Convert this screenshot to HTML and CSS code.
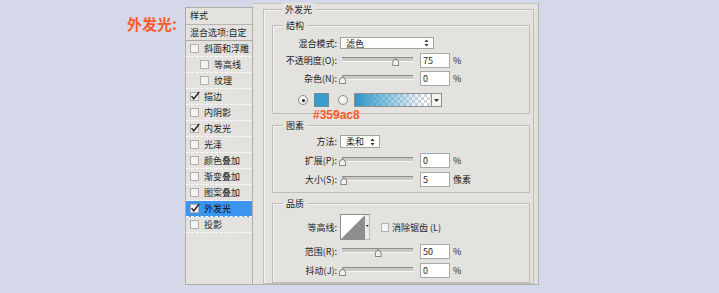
FILE: index.html
```html
<!DOCTYPE html>
<html lang="zh">
<head>
  <meta charset="UTF-8" />
  <title>外发光</title>
  <link rel="stylesheet" href="styles.css">
</head>
<body>
  <div class="stage">
    <h1 class="note">外发光:</h1>

    <div class="dialog">
      <aside class="styles-list">
        <div class="list-head">样式</div>
        <div class="list-blend">混合选项:自定</div>
        <ul class="list">
          <li class="item"><span class="cb"></span>斜面和浮雕</li>
          <li class="item sub"><span class="cb"></span>等高线</li>
          <li class="item sub"><span class="cb"></span>纹理</li>
          <li class="item"><span class="cb on"><svg viewBox="0 0 10 10"><path d="M1.5 5.2 L3.8 7.8 L9.2 1" /></svg></span>描边</li>
          <li class="item"><span class="cb"></span>内阴影</li>
          <li class="item"><span class="cb on"><svg viewBox="0 0 10 10"><path d="M1.5 5.2 L3.8 7.8 L9.2 1" /></svg></span>内发光</li>
          <li class="item"><span class="cb"></span>光泽</li>
          <li class="item"><span class="cb"></span>颜色叠加</li>
          <li class="item"><span class="cb"></span>渐变叠加</li>
          <li class="item"><span class="cb"></span>图案叠加</li>
          <li class="item active"><span class="cb on"><svg viewBox="0 0 10 10"><path d="M1.5 5.2 L3.8 7.8 L9.2 1" /></svg></span>外发光</li>
          <li class="item"><span class="cb"></span>投影</li>
        </ul>
      </aside>

      <main class="panel">
        <section class="group outer">
          <div class="group-title">外发光</div>

          <section class="group struct">
            <div class="group-title">结构</div>
            <div class="row r-select">
              <span class="lbl">混合模式:</span>
              <div class="select wide"><span>滤色</span><svg class="updown" viewBox="0 0 5 8"><path d="M0.5 3 L2.5 0.5 L4.5 3 Z M0.5 5 L2.5 7.5 L4.5 5 Z" /></svg></div>
            </div>
            <div class="row r-opacity">
              <span class="lbl">不透明度(O):</span>
              <div class="slider"><span class="thumb" style="left: 75%"></span></div>
              <div class="num">75</div>
              <span class="unit">%</span>
            </div>
            <div class="row r-noise">
              <span class="lbl">杂色(N):</span>
              <div class="slider"><span class="thumb" style="left: 0%"></span></div>
              <div class="num">0</div>
              <span class="unit">%</span>
            </div>
            <div class="row r-color">
              <span class="radio on"></span>
              <span class="swatch"></span>
              <span class="radio"></span>
              <span class="gradient"></span>
              <span class="drop"><svg viewBox="0 0 5 3"><path d="M0 0 L5 0 L2.5 3 Z" /></svg></span>
            </div>
            <span class="hex">#359ac8</span>
          </section>

          <section class="group elements">
            <div class="group-title">图素</div>
            <div class="row r-method">
              <span class="lbl">方法:</span>
              <div class="select narrow"><span>柔和</span><svg class="updown" viewBox="0 0 5 8"><path d="M0.5 3 L2.5 0.5 L4.5 3 Z M0.5 5 L2.5 7.5 L4.5 5 Z" /></svg></div>
            </div>
            <div class="row r-spread">
              <span class="lbl">扩展(P):</span>
              <div class="slider"><span class="thumb" style="left: 0%"></span></div>
              <div class="num">0</div>
              <span class="unit">%</span>
            </div>
            <div class="row r-size">
              <span class="lbl">大小(S):</span>
              <div class="slider"><span class="thumb" style="left: 2%"></span></div>
              <div class="num">5</div>
              <span class="unit">像素</span>
            </div>
          </section>

          <section class="group quality">
            <div class="group-title">品质</div>
            <div class="row r-contour">
              <span class="lbl">等高线:</span>
              <svg class="contour" viewBox="0 0 30 26">
                <rect x="0.5" y="0.5" width="29" height="25" fill="#fff" stroke="#8e8e8e" />
                <polygon points="1,25 25,1 25,25" fill="#8f8d8e" />
                <rect x="25" y="1" width="4.5" height="24.5" fill="#ecebe8" />
                <path d="M25.8 11 L28.8 11 L27.3 13 Z" fill="#333" />
              </svg>
              <span class="cb aa"></span>
              <span class="aa-text">消除锯齿 (L)</span>
            </div>
            <div class="row r-range">
              <span class="lbl">范围(R):</span>
              <div class="slider"><span class="thumb" style="left: 50%"></span></div>
              <div class="num">50</div>
              <span class="unit">%</span>
            </div>
            <div class="row r-jitter">
              <span class="lbl">抖动(J):</span>
              <div class="slider"><span class="thumb" style="left: 0%"></span></div>
              <div class="num">0</div>
              <span class="unit">%</span>
            </div>
          </section>
        </section>
      </main>
    </div>
  </div>
</body>
</html>
```

FILE: styles.css
```css
* {
  box-sizing: border-box;
  margin: 0;
  padding: 0;
}

body {
  background: #d5d8e8;
  font-family: 'Noto Sans CJK SC', 'Noto Sans', sans-serif;
  font-size: 9px;
  color: #1e1e1e;
  width: 719px;
  height: 293px;
  overflow: hidden;
}

.stage {
  display: flex;
  padding: 3px 0 0 127px;
}

.note {
  width: 58px;
  margin-top: 13px;
  font-size: 15px;
  line-height: 16px;
  font-weight: bold;
  color: #f85b2b;
  align-self: flex-start;
}

.dialog {
  display: flex;
  height: 282px;
}

/* left: style list */
.styles-list {
  width: 68px;
  margin-top: 4px;
  background: #e3e2de;
  border: 1px solid #aeada8;
}

.list-head {
  height: 17px;
  line-height: 16px;
  padding-left: 4px;
  border-bottom: 1px solid #b6b5b0;
}

.list-blend {
  height: 16px;
  line-height: 15px;
  padding-left: 4px;
  border-bottom: 1px solid #a9a8a3;
}

.list {
  list-style: none;
}

.item {
  display: flex;
  align-items: center;
  height: 16px;
  padding-left: 4px;
  border-bottom: 1px dashed #fbfbfa;
  white-space: nowrap;
}

.item.sub {
  padding-left: 14px;
}

.item.active {
  background: #3b95ef;
  color: #0e0e0e;
}

.cb {
  display: inline-block;
  position: relative;
  width: 9px;
  height: 9px;
  margin-right: 5px;
  background: #f3f3f1;
  border: 1px solid #b0b0b0;
  flex-shrink: 0;
}

.cb svg {
  position: absolute;
  left: -1px;
  top: -2px;
  width: 10px;
  height: 10px;
  overflow: visible;
}

.cb svg path {
  fill: none;
  stroke: #222;
  stroke-width: 1.4;
}

/* right: settings panel */
.panel {
  width: 286px;
  background: #e3e2de;
  border-top: 1px solid #c4c3be;
  border-right: 1px solid #b3b2ad;
  border-bottom: 1px solid #b3b2ad;
  padding: 5px 4px 0 10px;
}

.group {
  position: relative;
  border: 1px solid #bebdb8;
  box-shadow: inset 1px 1px 0 #f3f3f1;
}

.group.outer {
  height: 275px;
  padding: 0 3px 0 8px;
}

.group-title {
  width: fit-content;
  height: 13px;
  line-height: 13px;
  margin: -7px 0 0 10px;
  padding: 0 3px;
  background: #e3e2de;
}

.outer > .group-title {
  margin-left: 10px;
}

.struct {
  margin-top: 9px;
  padding-bottom: 6px;
}

.elements {
  margin-top: 11px;
  padding-bottom: 5px;
}

.quality {
  margin-top: 10px;
  padding-bottom: 4px;
}

.row {
  display: flex;
  align-items: center;
  height: 15px;
  white-space: nowrap;
}

.lbl {
  width: 64px;
  margin-right: 3px;
  text-align: right;
}

.r-select { margin-top: 5px; height: 12px; }
.r-opacity { margin-top: 4px; }
.r-noise { margin-top: 3px; }
.r-color { margin-top: 7px; height: 14px; padding-left: 25px; }
.r-method { margin-top: 3px; height: 13px; }
.r-spread { margin-top: 5px; }
.r-size { margin-top: 4px; }
.r-contour { margin-top: 4px; height: 26px; }
.r-range { margin-top: 4px; }
.r-jitter { margin-top: 4px; }

.select {
  display: flex;
  align-items: center;
  justify-content: space-between;
  height: 100%;
  padding: 0 4px 0 5px;
  background: #fdfdfc;
  border: 1px solid #a2a2a0;
}

.select.wide { width: 94px; }
.select.narrow { width: 40px; }

.updown {
  width: 5px;
  height: 8px;
  fill: #333;
}

.slider {
  position: relative;
  width: 71px;
  height: 15px;
  margin: 0 7px 0 2px;
}

.slider::before {
  content: '';
  position: absolute;
  left: 0;
  right: 0;
  top: 4px;
  height: 3px;
  background: #c9c8c4;
  border-top: 1px solid #8e8d89;
  border-bottom: 1px solid #f6f6f4;
}

.thumb {
  position: absolute;
  top: 5px;
  width: 7px;
  height: 8px;
  margin-left: -3px;
  background: #8a8986;
  clip-path: polygon(50% 0, 100% 40%, 100% 100%, 0 100%, 0 40%);
}

.thumb::after {
  content: '';
  position: absolute;
  left: 1px;
  top: 1.5px;
  width: 5px;
  height: 5.5px;
  background: #f2f2f0;
  clip-path: polygon(50% 0, 100% 40%, 100% 100%, 0 100%, 0 40%);
}

.num {
  width: 30px;
  height: 15px;
  line-height: 13px;
  padding-left: 2px;
  background: #fff;
  border: 1px solid #a9a9a7;
}

.unit {
  margin-left: 3px;
}

.radio {
  width: 10px;
  height: 10px;
  border-radius: 50%;
  border: 1px solid #8f8f8d;
  background: radial-gradient(circle at 40% 35%, #ffffff, #dcdcda);
  margin-right: 6px;
  position: relative;
}

.radio.on::after {
  content: '';
  position: absolute;
  left: 2.5px;
  top: 2.5px;
  width: 3px;
  height: 3px;
  border-radius: 50%;
  background: #222;
}

.swatch {
  width: 15px;
  height: 14px;
  background: #3a9bcd;
  border: 1px solid #6e8ea0;
  margin-right: 9px;
}

.gradient {
  width: 78px;
  height: 14px;
  border: 1px solid #8f8f8f;
  background:
    linear-gradient(90deg, #2f94c9 0%, rgba(60, 160, 210, 0.55) 45%, rgba(60, 160, 210, 0) 92%),
    repeating-conic-gradient(#d6d6d6 0 25%, #ffffff 0 50%) 0 0 / 6px 6px;
}

.drop {
  display: flex;
  align-items: center;
  justify-content: center;
  width: 10px;
  height: 14px;
  background: #f4f4f2;
  border: 1px solid #8f8f8f;
  border-left: none;
}

.drop svg {
  width: 5px;
  height: 3px;
  fill: #333;
}

.hex {
  position: absolute;
  left: 40px;
  top: 83px;
  font-family: 'Liberation Sans', Arial, sans-serif;
  font-size: 12px;
  line-height: 12px;
  font-weight: bold;
  color: #f85b2b;
}

.contour {
  width: 30px;
  height: 26px;
}

.cb.aa {
  width: 8px;
  height: 9px;
  margin: 0 3px 0 11px;
}

.aa-text {
  letter-spacing: 0;
}
```
